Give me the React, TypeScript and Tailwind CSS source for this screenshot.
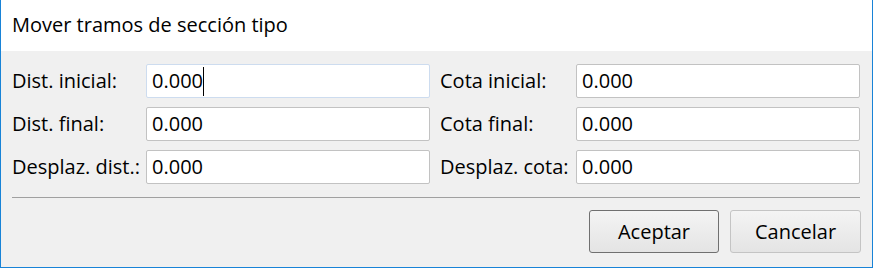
import React from "react";

interface Field {
  label: string;
  value: string;
  focused?: boolean;
}

const rows: [Field, Field][] = [
  [
    { label: "Dist. inicial:", value: "0.000", focused: true },
    { label: "Cota inicial:", value: "0.000" },
  ],
  [
    { label: "Dist. final:", value: "0.000" },
    { label: "Cota final:", value: "0.000" },
  ],
  [
    { label: "Desplaz. dist.:", value: "0.000" },
    { label: "Desplaz. cota:", value: "0.000" },
  ],
];

function TextBox({ field }: { field: Field }) {
  return (
    <div
      className={
        field.focused
          ? "flex h-[34px] items-center rounded-[2px] border border-[#cddcef] bg-white pl-[5px]"
          : "flex h-[34px] items-center rounded-[2px] border border-[#c2c2c2] bg-white pl-[5px]"
      }
    >
      <span>{field.value}</span>
      {field.focused && <span className="h-[29px] w-px bg-black" />}
    </div>
  );
}

export default function App() {
  return (
    <div
      className="flex h-[268px] w-[873px] flex-col border-x border-b border-[#1883d7] bg-[#f0f0f0] text-[20px] leading-none text-black"
      style={{ fontFamily: '"Open Sans", "Noto Sans", sans-serif' }}
    >
      {/* Title strip */}
      <div className="flex h-[51px] items-center bg-white pl-[11px] pb-[2px]">
        Mover tramos de sección tipo
      </div>

      {/* Form fields */}
      <div className="grid grid-cols-[134px_284px_146px_284px] gap-y-[9px] pl-[11px] pt-[13px]">
        {rows.map(([left, right]) => (
          <React.Fragment key={left.label}>
            <div className="flex items-center whitespace-nowrap">{left.label}</div>
            <TextBox field={left} />
            <div className="flex items-center whitespace-nowrap pl-[10px]">{right.label}</div>
            <TextBox field={right} />
          </React.Fragment>
        ))}
      </div>

      <div className="ml-[11px] mr-[12px] mt-[13px] h-px bg-[#a0a0a0]" />

      {/* Buttons */}
      <div className="mr-[11px] mt-[12px] flex justify-end gap-[11px]">
        <button className="h-[43px] w-[130px] rounded-[3px] border border-[#707070] bg-gradient-to-b from-[#f4f4f4] to-[#e4e4e4]">
          Aceptar
        </button>
        <button className="h-[43px] w-[131px] rounded-[3px] border border-[#c4c4c4] bg-gradient-to-b from-[#f4f4f4] to-[#e4e4e4]">
          Cancelar
        </button>
      </div>
    </div>
  );
}
